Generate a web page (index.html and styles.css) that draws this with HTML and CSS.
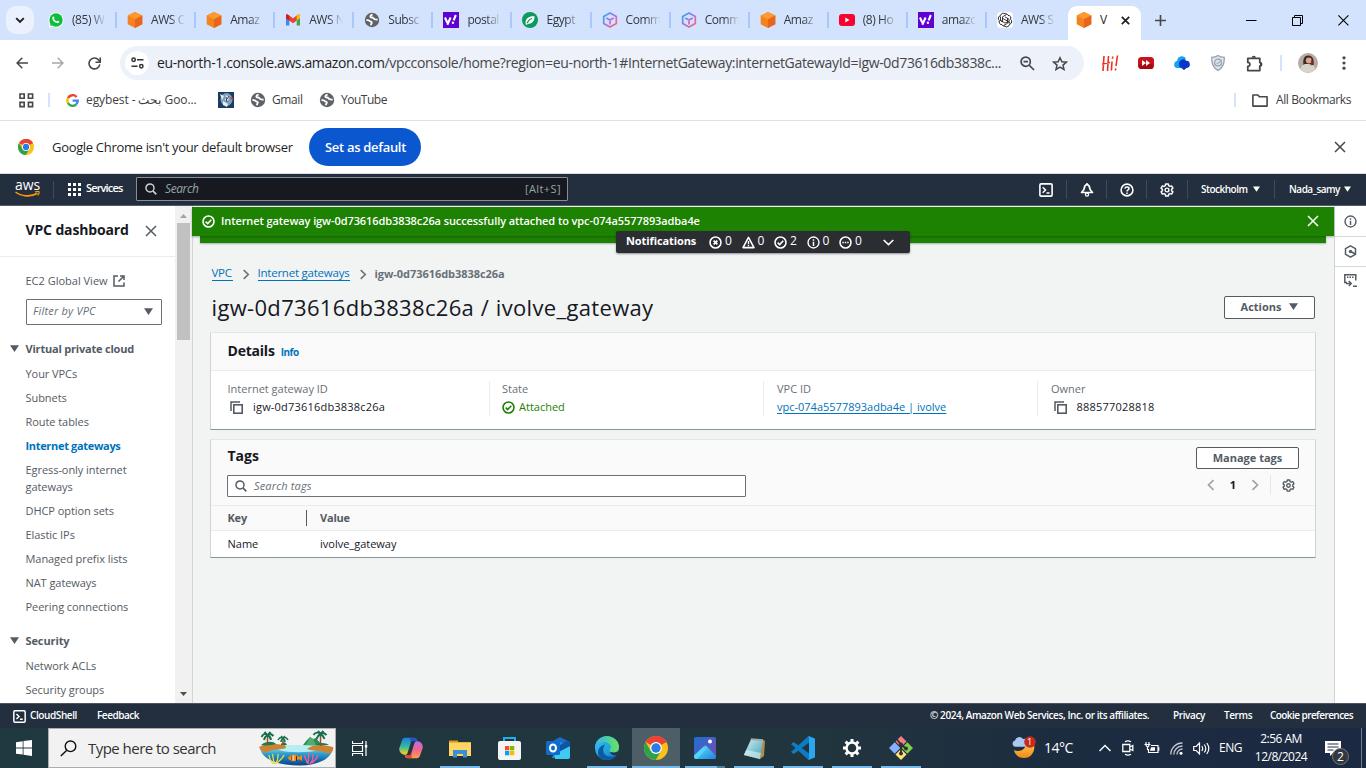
FILE: index.html
```html
<!DOCTYPE html>
<html lang="en">
<head>
<meta charset="utf-8">
<title>VPC | eu-north-1</title>
<link rel="stylesheet" href="styles.css">
</head>
<body>
<svg class="defs" aria-hidden="true">
  <defs>
    <linearGradient id="gCube" x1="0" y1="0" x2="1" y2="1"><stop offset="0" stop-color="#19b5e6"/><stop offset=".5" stop-color="#b06ee8"/><stop offset="1" stop-color="#ff6a5a"/></linearGradient>
    <linearGradient id="gCopA" x1="0" y1="0" x2="0" y2="1"><stop offset="0" stop-color="#1b7fe0"/><stop offset=".5" stop-color="#2fb8a0"/><stop offset="1" stop-color="#ffd21f"/></linearGradient>
    <linearGradient id="gCopB" x1="0" y1="0" x2="0" y2="1"><stop offset="0" stop-color="#b06ef0"/><stop offset=".5" stop-color="#f2648f"/><stop offset="1" stop-color="#ffa04a"/></linearGradient>
    <linearGradient id="gEdge" x1="0" y1="0" x2="1" y2="1"><stop offset="0" stop-color="#35c1f1"/><stop offset=".6" stop-color="#1f9fdc"/><stop offset="1" stop-color="#0b60b0"/></linearGradient>
    <linearGradient id="gEdgeG" x1="0" y1="0" x2="1" y2="0"><stop offset="0" stop-color="#2fb6ec"/><stop offset="1" stop-color="#6be35c"/></linearGradient>
    <linearGradient id="gPho" x1="0" y1="0" x2="1" y2="1"><stop offset="0" stop-color="#1c6fd0"/><stop offset="1" stop-color="#7d4bb5"/></linearGradient>
    <linearGradient id="gPho2" x1="0" y1="0" x2="1" y2="1"><stop offset="0" stop-color="#5fe0fb"/><stop offset="1" stop-color="#1c86dd"/></linearGradient>
    <linearGradient id="gNote" x1="0" y1="0" x2="1" y2="1"><stop offset="0" stop-color="#d6f1f5"/><stop offset="1" stop-color="#3a9fb3"/></linearGradient>
    <linearGradient id="gBeach" x1="0" y1="0" x2="0" y2="1"><stop offset="0" stop-color="#a8ecf4"/><stop offset=".4" stop-color="#2a9fd0"/><stop offset="1" stop-color="#0b3f86"/></linearGradient>
    <linearGradient id="gMoon" x1="0" y1="0" x2="0" y2="1"><stop offset="0" stop-color="#ffc94a"/><stop offset="1" stop-color="#f08a1c"/></linearGradient>

    <symbol id="aws-cube" viewBox="0 0 16 16"><path d="M8 0l7.3 3.6v8.6L8 16 .7 12.2V3.6z" fill="#f58220"/><path d="M8 0l7.3 3.6L8 7.2.7 3.6z" fill="#fc9a2e"/><path d="M8 7.2l7.3-3.6v8.6L8 16z" fill="#e8651c"/></symbol>
    <symbol id="globe" viewBox="0 0 16 16"><circle cx="8" cy="8" r="7.2" fill="#5f6368"/><path d="M2.400 8.200c1.800-.3 3 .1 3.600 1 .5.800 1.700.2 1.800 1.300 0 1-.9 1.200-.8 2.700" fill="none" stroke="#fff" stroke-width="1.800"/><path d="M8.600 2.700c-2 .5-2.700 1.600-2 2.400.7.700 2.200 0 2.700 1 .5 1.100 1.600 1.700 4.300 1.500" fill="none" stroke="#fff" stroke-width="1.800"/></symbol>
    <symbol id="yahoo" viewBox="0 0 16 16"><path d="M0 0h16v16H0z" fill="#5f01d1"/><path d="M2 5.500l2.200 5M7.600 5.500L4.300 12.800M12.800 3l-2.100 5.400" stroke="#fff" stroke-width="2.100" fill="none"/><circle cx="9.900" cy="10.800" r="1.200" fill="#fff"/></symbol>
    <symbol id="cube-line" viewBox="0 0 16 16"><path d="M8 1l6.300 3.500v7L8 15l-6.300-3.500v-7zM4.200 5.900L8 8l3.800-2.100M8 8v4.600" fill="none" stroke="url(#gCube)" stroke-width="1.700"/></symbol>
    <symbol id="chrome" viewBox="0 0 24 24"><circle cx="12" cy="12" r="12" fill="#fbc116"/><path d="M12 12L1.600 6A12 12 0 0 1 22.400 6z" fill="#ea4335"/><path d="M12 0a12 12 0 0 1 10.400 6.500H12z" fill="#ea4335"/><path d="M1.600 6A12 12 0 0 0 11.800 24L17 15 12 12 6.800 15z" fill="#2ba24c"/><circle cx="12" cy="12" r="5.900" fill="#fff"/><circle cx="12" cy="12" r="4.700" fill="#2a7bea"/></symbol>
    <symbol id="x" viewBox="0 0 12 12"><path d="M1 1l10 10M11 1L1 11" fill="none" stroke="currentColor" stroke-width="1.500"/></symbol>
    <symbol id="caret" viewBox="0 0 8 6"><path d="M0 0h8L4 6z" fill="currentColor"/></symbol>
    <symbol id="shell" viewBox="0 0 14 14"><rect x=".9" y=".9" width="12.200" height="12.200" rx="1.200" fill="none" stroke="currentColor" stroke-width="1.600"/><path d="M3.700 4.300l2.800 2.700-2.800 2.700M7.500 10h3" fill="none" stroke="currentColor" stroke-width="1.500"/></symbol>
    <symbol id="gear" viewBox="0 0 14 14"><path d="M5.700 1h2.600l.4 1.700 1.200.7 1.700-.5 1.300 2.200L11.600 6.300v1.400l1.300 1.200-1.300 2.200-1.700-.5-1.200.7-.4 1.700H5.700l-.4-1.700-1.200-.7-1.700.5-1.300-2.200 1.300-1.200V6.300L1.100 5.100l1.300-2.200 1.700.5 1.200-.7z" fill="none" stroke="currentColor" stroke-width="1.500" stroke-linejoin="round"/><circle cx="7" cy="7" r="1.900" fill="none" stroke="currentColor" stroke-width="1.400"/></symbol>
    <symbol id="search" viewBox="0 0 14 14"><circle cx="5.800" cy="5.800" r="4.700" fill="none" stroke="currentColor" stroke-width="1.700"/><path d="M9.200 9.200l4 4" stroke="currentColor" stroke-width="1.900"/></symbol>
    <symbol id="ok" viewBox="0 0 14 14"><circle cx="7" cy="7" r="5.900" fill="none" stroke="currentColor" stroke-width="1.700"/><path d="M3.900 7.200l2.200 2 3.900-4.100" fill="none" stroke="currentColor" stroke-width="1.700"/></symbol>
    <symbol id="info" viewBox="0 0 14 14"><circle cx="7" cy="7" r="5.900" fill="none" stroke="currentColor" stroke-width="1.500"/><path d="M7 6.200v4.600M7 3.400V5" stroke="currentColor" stroke-width="1.600"/></symbol>
    <symbol id="copy" viewBox="0 0 13 13"><path d="M1 10V1h9" fill="none" stroke="currentColor" stroke-width="1.500"/><rect x="3.800" y="3.800" width="8.400" height="8.400" fill="none" stroke="currentColor" stroke-width="1.600"/></symbol>
    <symbol id="chev" viewBox="0 0 8 12"><path d="M1.500 1.200L6.500 6l-5 4.800" fill="none" stroke="currentColor" stroke-width="1.700"/></symbol>
  </defs>
</svg>

<header class="tabs">
  <div class="tab-search"><svg width="10" height="7" viewBox="0 0 10 7"><path d="M1.200 1.200L5 5l3.800-3.800" fill="none" stroke="#1f1f1f" stroke-width="1.900"/></svg></div>
  <div class="tab"><svg width="16" height="16" viewBox="0 0 16 16"><circle cx="8" cy="8" r="7.600" fill="#fff"/><path d="M.8 15.400l1-3.600A7 7 0 1 1 4.500 14.400z" fill="#fff"/><circle cx="8" cy="8" r="6.700" fill="#0ebd3c"/><path d="M2 14l.8-3 2 2z" fill="#0ebd3c"/><path d="M5.300 4.300l1.200 1.400-.5 1c.6 1.300 1.600 2.200 2.900 2.700l1-.8 1.500 1.200c-.3 1.600-1.900 1.700-3.300 1C6 9.800 4.700 8.300 4.300 6.500c0-1 .3-1.800 1-2.200z" fill="#fff"/></svg><span>(85) W</span></div>
  <div class="tab"><svg width="16" height="16"><use href="#aws-cube"/></svg><span>AWS C</span></div>
  <div class="tab"><svg width="16" height="16"><use href="#aws-cube"/></svg><span>Amaz</span></div>
  <div class="tab"><svg width="16" height="16" viewBox="0 0 16 16"><path d="M1 3.500v10h3.300V6z" fill="#4285f4"/><path d="M11.700 6v7.500H15v-10z" fill="#34a853"/><path d="M1 3v3.300l7 5 7-5V3.600c0-1.200-1.300-1.500-2.200-.9L8 6.300 3.200 2.700C2.200 2 1 2.300 1 3z" fill="#ea4335"/><path d="M11.700 4v4.700L15 6.200V3.500c0-1.300-1.500-1.500-2.300-.7z" fill="#fbbc04"/><path d="M1 3.500v2.700l3.300 2.500V4C3 2 1 2 1 3.500z" fill="#c5221f"/></svg><span>AWS N</span></div>
  <div class="tab"><svg width="16" height="16"><use href="#globe"/></svg><span>Subsc</span></div>
  <div class="tab"><svg width="16" height="16"><use href="#yahoo"/></svg><span>postal</span></div>
  <div class="tab"><svg width="16" height="16" viewBox="0 0 16 16"><circle cx="8" cy="8" r="8" fill="#0d9960"/><path d="M3.500 10.500C3.500 6.500 7 3.800 12.500 4.200c.2 5-2.600 7.600-6.300 7.500L4.500 13l-.7-.7z" fill="#fff"/><path d="M5 11.200c1.200-2.600 3-4.200 5-5" fill="none" stroke="#0d9960" stroke-width="1.200"/></svg><span>Egypt</span></div>
  <div class="tab"><svg width="16" height="16"><use href="#cube-line"/></svg><span>Comm</span></div>
  <div class="tab"><svg width="16" height="16"><use href="#cube-line"/></svg><span>Comm</span></div>
  <div class="tab"><svg width="16" height="16"><use href="#aws-cube"/></svg><span>Amaz</span></div>
  <div class="tab"><svg width="16" height="16" viewBox="0 0 16 16"><rect y="2" width="16" height="12" rx="3" fill="#f8002f"/><path d="M6.300 5.500v5L10.500 8z" fill="#fff"/></svg><span>(8) Ho</span></div>
  <div class="tab"><svg width="16" height="16"><use href="#yahoo"/></svg><span>amazc</span></div>
  <div class="tab last"><svg width="16" height="16" viewBox="0 0 16 16"><rect width="16" height="16" rx="4" fill="#fff"/><path d="M8 1.800a2.800 2.800 0 0 1 3 1.500 2.800 2.800 0 0 1 2.600 4 2.900 2.900 0 0 1-1.100 5.100A2.800 2.800 0 0 1 8 14.200a2.900 2.900 0 0 1-3-1.500 2.800 2.800 0 0 1-2.600-4 2.900 2.900 0 0 1 1.100-5.100A2.900 2.900 0 0 1 8 1.800z" fill="none" stroke="#222"/><path d="M5.500 9.700V4.800l4-2.200M5.500 6.300l4.700 2.600 3 1.800M8 4.900l4 2.300v4.500M10.500 6.300v5l-4 2.200M10.500 9.700L8 11.100l-5-3M5.500 9.700L3.500 8.500v-4" fill="none" stroke="#222" stroke-width=".9"/></svg><span>AWS S</span></div>
  <div class="tab-active"><svg width="16" height="16"><use href="#aws-cube"/></svg><span>V</span><svg class="dark" width="9" height="9" viewBox="0 0 9 9"><path d="M.8.8l7.400 7.400M8.200.8L.8 8.200" stroke="currentColor" stroke-width="1.700"/></svg></div>
  <svg class="plus" width="11" height="11" viewBox="0 0 11 11"><path d="M5.500 0v11M0 5.500h11" stroke="#444746" stroke-width="1.600"/></svg>
  <div class="win">
    <svg width="11" height="11" viewBox="0 0 11 11"><path d="M0 5.500h10.500" stroke="#000"/></svg>
    <svg width="11" height="11" viewBox="0 0 11 11"><path d="M.5 2.500h8v8h-8zM2.500 2.500v-2h8v8h-2" fill="none" stroke="#000"/></svg>
    <svg width="11" height="11" viewBox="0 0 11 11"><path d="M.4.4l10 10M10.400.4l-10 10" stroke="#000" stroke-width="1.100"/></svg>
  </div>
</header>

<div class="toolbar">
  <svg class="t-back" width="12" height="12" viewBox="0 0 12 12"><path d="M12 6H1.200M6.300.8L1.100 6l5.200 5.200" fill="none" stroke="#474747" stroke-width="1.500"/></svg>
  <svg class="t-fwd" width="12" height="12" viewBox="0 0 12 12"><path d="M0 6h10.800M5.700.8L10.900 6l-5.200 5.200" fill="none" stroke="#a9a9a9" stroke-width="1.500"/></svg>
  <svg class="t-rel" width="13" height="13" viewBox="0 0 13 13"><path d="M11.800 7.300A5.400 5.400 0 1 1 10.600 3L12 4.500" fill="none" stroke="#474747" stroke-width="1.600"/><path d="M12.200.4v4.800H7.500" fill="none" stroke="#474747" stroke-width="1.600"/></svg>
  <div class="omni">
    <div class="tune"><svg width="13" height="12" viewBox="0 0 13 12"><g fill="none" stroke="#333" stroke-width="1.500"><circle cx="2.600" cy="2.700" r="1.700"/><path d="M6 2.700h6.500M.5 9.300h6"/><circle cx="10.300" cy="9.300" r="1.700"/></g></svg></div>
    <span class="url"><b>eu-north-1.console.aws.amazon.com</b>/vpcconsole/home?region=eu-north-1#InternetGateway:internetGatewayId=igw-0d73616db3838c...</span>
    <svg class="o-zoom" width="15" height="15" viewBox="0 0 15 15"><circle cx="5.700" cy="5.700" r="4.600" fill="none" stroke="#474747" stroke-width="1.700"/><path d="M9 9l5 5M3.500 5.700h4.500" stroke="#474747" stroke-width="1.700"/></svg>
    <svg class="o-star" width="16" height="15" viewBox="0 0 16 15"><path d="M8 1.800l1.900 4 4.400.4-3.300 2.900 1 4.300L8 11.100l-4 2.300 1-4.300-3.300-2.900 4.400-.4z" fill="none" stroke="#474747" stroke-width="1.500"/></svg>
  </div>
  <div class="ext">
    <svg width="17" height="17" viewBox="0 0 17 17"><path d="M2 1L1 16M6.500 1l-1 15M0 9l8-1.500M10 6.500l-.6 9M10.700 1.500l-.2 2.300M15.500.5L14 11M13.700 13.500l-.3 2" fill="none" stroke="#ea3323" stroke-width="1.600"/></svg>
    <svg width="16" height="12" viewBox="0 0 16 12"><rect width="16" height="12" rx="3.500" fill="#c8131c"/><rect x="1" y="7" width="14" height="5" rx="2" fill="#a50d16"/><path d="M4 3v6l4-3zM8 3v6l4-3z" fill="#fff"/></svg>
    <svg width="16" height="14" viewBox="0 0 16 14"><path d="M.2 8.500a4 4 0 0 1 3-3.700 4.800 4.800 0 0 1 8.300-3V12H3.500A3.400 3.400 0 0 1 .2 8.500z" fill="#12a3f5"/><path d="M5 7.500a4 4 0 0 1 7-2.800 3.600 3.600 0 1 1 .4 7.300L10 14.200 7.500 12A4 4 0 0 1 5 7.500z" fill="#0b36c9"/></svg>
    <svg width="14" height="16" viewBox="0 0 14 16"><path d="M7 .6C9 2 11 2.400 13.300 2.400c.3 6-1.400 10.500-6.300 13C2.100 12.900.4 8.400.7 2.400 3 2.400 5 2 7 .6z" fill="#dfe3ea" stroke="#98a1b0" stroke-width="1.200"/><circle cx="7" cy="7.500" r="3.400" fill="none" stroke="#98a1b0" stroke-width="1.300"/><path d="M5.500 7.800l1.200 1 2.200-2.600" fill="none" stroke="#8490a3"/></svg>
    <svg width="17" height="17" viewBox="0 0 17 17"><path d="M1.800 3.300h12v4.300a1.600 1.600 0 0 1 0 3.400v4.600h-12v-4.100a2 2 0 1 0 0-4.100z" fill="none" stroke="#474747" stroke-width="1.800" stroke-linejoin="round"/><path d="M5.600 2.800a2 2 0 1 1 4.300 0zM14 7.300a2 2 0 1 1 0 4z" fill="#474747"/></svg>
    <i></i>
    <svg width="20" height="20" viewBox="0 0 20 20"><circle cx="10" cy="10" r="10" fill="#b5aba3"/><path d="M5.500 12C4.500 5 7 2.300 10.500 2.500c4 .2 6 4 5 9.500z" fill="#3a2a28"/><circle cx="10.800" cy="7.500" r="3" fill="#d9a48f"/><path d="M2.500 16.500c1-5 4-6 7-5.500 4 0 7 1.500 8 5A10 10 0 0 1 2.500 16.500z" fill="#d5d3cc"/><path d="M13.500 6l2 4-3 3z" fill="#93251e"/></svg>
    <svg width="4" height="14" viewBox="0 0 4 14"><g fill="#474747"><circle cx="2" cy="1.800" r="1.600"/><circle cx="2" cy="7" r="1.600"/><circle cx="2" cy="12.200" r="1.600"/></g></svg>
  </div>
</div>

<div class="bookmarks">
  <svg class="b-grid" width="15" height="15" viewBox="0 0 15 15"><path d="M1 1h4.200v4.200H1zM9.400 1h4.200v4.200H9.400zM1 9.400h4.200v4.200H1zM9.400 9.400h4.200v4.200H9.400z" fill="none" stroke="#474747" stroke-width="1.600"/></svg>
  <i class="b-sep"></i>
  <svg class="b-g" width="13" height="13" viewBox="0 0 13 13"><g fill="none" stroke-width="2.400"><path d="M10.600 3A5.200 5.200 0 0 0 2 4" stroke="#ea4335"/><path d="M2 4a5.200 5.200 0 0 0 0 5" stroke="#fbbc05"/><path d="M2 9a5.200 5.200 0 0 0 8.200 1.400" stroke="#34a853"/><path d="M10.200 10.400A5 5 0 0 0 11.700 6.600H6.600" stroke="#4285f4"/></g></svg>
  <span class="b-egy">egybest - بحث Goo...</span>
  <svg class="b-pic" width="16" height="16" viewBox="0 0 16 16"><path d="M0 0h16v16H0z" fill="#1b3c60"/><ellipse cx="8.500" cy="7.500" rx="6" ry="6.500" fill="#7ea0bd"/><path d="M2 2l4 2-2 4zM8 3l3 2-1 4-3-1zM5 9l5 3-1 3-4-2z" fill="#e6eef4"/><path d="M8 5l1 5M11 4l-2 3" stroke="#27405c" fill="none"/><path d="M12.500 5h2v2.500h-2z" fill="#d0402f"/></svg>
  <svg class="b-gl" width="16" height="16"><use href="#globe"/></svg><span class="b-gm">Gmail</span>
  <svg class="b-gl2" width="16" height="16"><use href="#globe"/></svg><span class="b-t">YouTube</span>
  <div class="b-all"><i class="b-sep"></i><svg width="16" height="13" viewBox="0 0 16 13"><path d="M.9 1h5l1.500 1.700h7.700v9.400H.9z" fill="none" stroke="#474747" stroke-width="1.600" stroke-linejoin="round"/></svg><span>All Bookmarks</span></div>
</div>

<div class="infobar">
  <svg width="16" height="16"><use href="#chrome"/></svg>
  <span>Google Chrome isn't your default browser</span>
  <button>Set as default</button>
  <svg class="close" width="12" height="12"><use href="#x"/></svg>
</div>

<nav class="aws">
  <div class="logo"><span>aws</span><svg width="25" height="7" viewBox="0 0 25 7"><path d="M.5 1C6 5.500 16 6.300 22.500 2.300" fill="none" stroke="#f90" stroke-width="1.600"/><path d="M20 1c1.500-.6 3.500-.8 4-.3.400.7-.3 2.500-1.300 3.800" fill="none" stroke="#f90" stroke-width="1.200"/></svg></div>
  <i class="sep"></i>
  <svg class="apps" width="13" height="13" viewBox="0 0 13 13"><path d="M0 0h3v3H0zM5 0h3v3H5zM10 0h3v3h-3zM0 5h3v3H0zM5 5h3v3H5zM10 5h3v3h-3zM0 10h3v3H0zM5 10h3v3H5zM10 10h3v3h-3z" fill="#fff"/></svg>
  <span class="services">Services</span>
  <div class="nav-search"><svg width="12" height="12"><use href="#search"/></svg><em>Search</em><span>[Alt+S]</span></div>
  <div class="nav-icons">
    <div class="c1"><svg width="14" height="14"><use href="#shell"/></svg></div>
    <div class="c2"><svg width="14" height="14" viewBox="0 0 14 14"><path d="M7 1.500c-2 .5-2.600 1.900-2.700 3.600C4.200 7 3 8 1.500 9.500h11C11 8 9.800 7 9.700 5.100 9.600 3.400 9 2 7 1.500z" fill="none" stroke="#fff" stroke-width="1.700" stroke-linejoin="round"/><path d="M7 0v2" stroke="#fff" stroke-width="1.500"/><circle cx="7" cy="11.600" r="1.600" fill="none" stroke="#fff" stroke-width="1.300"/></svg></div>
    <div class="c3"><svg width="14" height="14" viewBox="0 0 14 14"><circle cx="7" cy="7" r="5.900" fill="none" stroke="#fff" stroke-width="1.600"/><path d="M5 5.600C5.100 3.500 9 3.600 9 5.600 9 6.900 7 6.900 7 8.500M7 9.500V11" fill="none" stroke="#fff" stroke-width="1.500"/></svg></div>
    <div class="c4"><svg width="14" height="14"><use href="#gear"/></svg></div>
    <div class="c5"><span>Stockholm</span><svg width="7" height="6"><use href="#caret"/></svg></div>
    <div class="c6"><span>Nada_samy</span><svg width="7" height="6"><use href="#caret"/></svg></div>
  </div>
</nav>

<div class="body">
  <aside class="side">
    <div class="side-h"><h2>VPC dashboard</h2><svg width="12" height="12"><use href="#x"/></svg></div>
    <div class="ec2"><span>EC2 Global View</span><svg width="12" height="12" viewBox="0 0 12 12"><path d="M5 1H1v10h10V7.500" fill="none" stroke="#545b64" stroke-width="1.500"/><path d="M7 1h4v4M11 1L5.500 6.500" fill="none" stroke="#545b64" stroke-width="1.500"/></svg></div>
    <div class="select"><em>Filter by VPC</em><svg width="9" height="7"><use href="#caret"/></svg></div>
    <div class="group"><svg width="9" height="7"><use href="#caret"/></svg><b>Virtual private cloud</b></div>
    <ul>
      <li>Your VPCs</li><li>Subnets</li><li>Route tables</li><li class="on">Internet gateways</li><li>Egress-only internet gateways</li><li>DHCP option sets</li><li>Elastic IPs</li><li>Managed prefix lists</li><li>NAT gateways</li><li>Peering connections</li>
    </ul>
    <div class="group g2"><svg width="9" height="7"><use href="#caret"/></svg><b class="sec">Security</b></div>
    <ul><li>Network ACLs</li><li>Security groups</li></ul>
  </aside>
  <div class="scroll"><svg width="7" height="4" viewBox="0 0 7 4"><path d="M0 4h7L3.500 0z" fill="#a3a3a3"/></svg><div class="thumb"></div><svg width="7" height="4" viewBox="0 0 7 4"><path d="M0 0h7L3.500 4z" fill="#505050"/></svg></div>

  <main>
    <div class="flash"><svg width="13" height="13"><use href="#ok"/></svg><span>Internet gateway igw-0d73616db3838c26a successfully attached to vpc-074a5577893adba4e</span><svg class="fx" width="12" height="12"><use href="#x"/></svg></div>
    <div class="flash2"></div>
    <div class="notif">
      <b>Notifications</b>
      <span><svg width="13" height="13" viewBox="0 0 14 14"><circle cx="7" cy="7" r="5.900" fill="none" stroke="#fff" stroke-width="1.700"/><path d="M5 5l4 4M9 5L5 9" stroke="#fff" stroke-width="1.900"/></svg>0</span>
      <span><svg width="13" height="13" viewBox="0 0 14 14"><path d="M7 1.500l5.900 11H1.100z" fill="none" stroke="#fff" stroke-width="1.700" stroke-linejoin="round"/><path d="M7 5.500v3M7 9.500V11" stroke="#fff" stroke-width="1.500"/></svg>0</span>
      <span><svg width="13" height="13"><use href="#ok"/></svg>2</span>
      <span><svg width="13" height="13"><use href="#info"/></svg>0</span>
      <span><svg width="13" height="13" viewBox="0 0 14 14"><circle cx="7" cy="7" r="5.900" fill="none" stroke="#fff" stroke-width="1.700"/><path d="M3.600 7h1.600M6.200 7h1.600M8.800 7h1.600" stroke="#fff" stroke-width="1.700"/></svg>0</span>
      <svg class="down" width="11" height="7" viewBox="0 0 11 7"><path d="M.7 1l4.800 4.600L10.300 1" fill="none" stroke="#fff" stroke-width="1.600"/></svg>
    </div>
    <div class="crumbs"><a>VPC</a><svg width="8" height="11"><use href="#chev"/></svg><a class="c-ig">Internet gateways</a><svg width="8" height="11"><use href="#chev"/></svg><b>igw-0d73616db3838c26a</b></div>
    <div class="title"><h1>igw-0d73616db3838c26a / ivolve_gateway</h1><button>Actions<svg width="9" height="7"><use href="#caret"/></svg></button></div>

    <section class="card details">
      <header><h3>Details</h3><a>Info</a></header>
      <div class="cols">
        <div class="k1"><label>Internet gateway ID</label><p><svg width="13" height="13"><use href="#copy"/></svg><span class="wide">igw-0d73616db3838c26a</span></p></div>
        <div><label>State</label><p class="green"><svg width="13" height="13"><use href="#ok"/></svg><span>Attached</span></p></div>
        <div class="k3"><label>VPC ID</label><p><a>vpc-074a5577893adba4e | ivolve</a></p></div>
        <div class="k3"><label>Owner</label><p><svg width="13" height="13"><use href="#copy"/></svg><span class="wide">888577028818</span></p></div>
      </div>
    </section>

    <section class="card tags">
      <div class="tags-h"><h3>Tags</h3><button>Manage tags</button></div>
      <div class="tags-f">
        <div class="find"><svg width="12" height="12"><use href="#search"/></svg><em>Search tags</em></div>
        <div class="pager"><svg class="flip" width="8" height="12"><use href="#chev"/></svg><b>1</b><svg width="8" height="12"><use href="#chev"/></svg><i></i><svg class="pg" width="13" height="13"><use href="#gear"/></svg></div>
      </div>
      <div class="row head"><div>Key</div><div>Value</div></div>
      <div class="row"><div>Name</div><div>ivolve_gateway</div></div>
    </section>
  </main>

  <aside class="rail">
    <div><svg width="13" height="13"><use href="#info"/></svg></div>
    <div><svg width="13" height="13" viewBox="0 0 13 13"><path d="M6.500.9l5 2.800v5.600l-5 2.800-5-2.800V3.700z" fill="none" stroke="#545b64" stroke-width="1.500"/><path d="M6.500 6.500L11.500 9" stroke="#545b64" stroke-width="1.500"/><circle cx="6.500" cy="6.500" r="1.700" fill="#545b64"/></svg></div>
    <div><svg width="13" height="13" viewBox="0 0 13 13"><path d="M3 8.500H.8V.8h11v5.700" fill="none" stroke="#545b64" stroke-width="1.500"/><path d="M3 3.300h1.500M5.500 3.300H7M8 3.300h1.500M2 9.500h5M4.800 7l2.500 2.500L4.800 12M9 12.200h4" fill="none" stroke="#545b64" stroke-width="1.400"/></svg></div>
  </aside>
</div>

<footer>
  <svg width="13" height="13"><use href="#shell"/></svg><span class="f1">CloudShell</span><span class="f2">Feedback</span>
  <span class="f3">© 2024, Amazon Web Services, Inc. or its affiliates.</span><span class="f4">Privacy</span><span class="f5">Terms</span><span class="f6">Cookie preferences</span>
</footer>

<div class="taskbar">
  <div class="start"><svg width="16" height="16" viewBox="0 0 16 16"><path d="M0 2.200L6.700 1.300v6.200H0zM7.500 1.100L16 0v7.500H7.500zM0 8.400h6.700v6.200L0 13.700zM7.500 8.400H16V16l-8.500-1.200z" fill="#fff"/></svg></div>
  <div class="tb-search">
    <svg width="17" height="17" viewBox="0 0 17 17"><circle cx="10.500" cy="6.300" r="5.300" fill="none" stroke="#111" stroke-width="1.400"/><path d="M6.800 10.200L.8 16" stroke="#111" stroke-width="1.500"/></svg>
    <span>Type here to search</span>
    <svg class="beach" width="75" height="36" viewBox="0 0 75 36">
      <path d="M1 19c12-4 55-4 73 0-2 8-11 16-33 16.500C17 35.500 4 29 1 19z" fill="url(#gBeach)"/>
      <path d="M20 15h34l6 5c-12 3-30 3-40 0z" fill="#b5eef3"/>
      <path d="M44 15l4-5 3-3 3 2 3-1 5 6 4 2z" fill="#2c8a5a"/><path d="M51 7l3 2 3 6H47z" fill="#4fae6d"/>
      <path d="M0 17c4-3 11-4 17-3l9 1 1 3c-6 2-15 1-20 5-3-1-6-3-7-6zM48 19c6-5 15-5 26-2 1 3-1 6-5 7-5-4-12-2-21-5z" fill="#c98434"/>
      <path d="M2 15c5-4 12-4 15-1-4 1-9 2-15 1zM22 14c2-3 5-2 6 1h-6zM57 15c4-3 10-2 13 0z" fill="#187a55"/>
      <path d="M8.500 15V6M24 15V9M61.500 16V4" stroke="#8a5526" stroke-width="1.500"/>
      <g fill="none" stroke="#14704f" stroke-width="2"><path d="M8.500 5C6 3 4 4 2.500 7M8.500 5C7 6 5.500 7 5 10M8.500 5c2-2 4-1 6 1M8.500 5c2 1 3 2 3.500 5M8 5L5.500 2M9 5l2.500-3"/><path d="M24 8c-2-1-4 0-5 2M24 8c-1 1-2 2-2 4M24 8c2-1 4 0 5 2M24 8c1 1 2 2 2 4M24 8l-2-2M24 8l2-2" stroke-width="1.500"/><path d="M61.500 4c-2-2-5-2-7 1M61.500 4c-2 1-3 2-4 5M61.500 4c2-2 4-1 6 1M61.500 4c2 1 3 2 4 5M61.500 4L59 .8M61.500 4l3-3"/></g>
      <path d="M14 34c-2-4-4-5-4-9M15 34c0-5-2-7-1-10M16 34c4-4 3-7 3-10M18 33c4-4 6-5 7-8" stroke="#e6dc4a" stroke-width="1.300" fill="none"/>
      <path d="M48 33c0-4-3-4-2-8M49 34c1-5 0-7 1-11M51 34c4-4 3-6 3-10M53 33c3-3 5-4 6-8" stroke="#ef5f9b" stroke-width="1.400" fill="none"/>
      <path d="M29 28c2-4 8-5 11-1l3-2v6l-3-2c-3 3-9 3-11-1z" fill="#f58a1f"/><path d="M33 25.500v5M37.500 26v5" stroke="#3a2a20" stroke-width="1"/><path d="M34 25.500v5" stroke="#fff"/>
    </svg>
  </div>
  <div class="app"><svg width="16" height="15" viewBox="0 0 16 15"><path d="M.5 0v2.500h10V0M.5 15v-2.500h10V15M.5 4.500h10v6H.500zM14 0v15" fill="none" stroke="#fff" stroke-width="1.200"/><path d="M12.800 4h2.500v2.500h-2.500z" fill="#fff"/></svg></div>
  <div class="app cop"><svg width="24" height="22" viewBox="0 0 24 22"><path d="M6 .8h9c2 0 2.800 1.200 3.300 3H14c-1.500 0-2 1-2.600 3L8.500 16c-.5 1.300-1.500 2-3 1.700C2 17.300-.2 14.500.3 11L3 3.500C3.600 1.700 4.500.8 6 .8z" fill="url(#gCopA)"/><path d="M18 21.200H9c-2 0-2.800-1.200-3.300-3H10c1.500 0 2-1 2.600-3L15.500 6c.5-1.300 1.500-2 3-1.700 3.500.4 5.700 3.200 5.200 6.700L21 18.500c-.6 1.800-1.500 2.700-3 2.700z" fill="url(#gCopB)"/><path d="M11 1h4c2 0 2.800 1.200 3.300 3H14c-1.500 0-2 .7-2.600 2z" fill="#2a52d0"/><path d="M6 18h5c1 0 1.500-1.500 2-3l-.5 6H9c-2 0-2.700-1-3-3z" fill="#e8452c"/></svg></div>
  <div class="app run"><svg width="22" height="20" viewBox="0 0 22 20"><path d="M0 2.500h9V6H0z" fill="#dd9a12"/><path d="M0 4h22v14H0z" fill="#ffd565"/><path d="M0 4h22v1H0z" fill="#e9b53c"/><path d="M4 19.500V12h14v7.500h-4V16H8v3.500z" fill="#3a8fd6"/></svg></div>
  <div class="app"><svg width="23" height="23" viewBox="0 0 23 23"><path d="M6 7V1h11v6" fill="none" stroke="#1eb0e8" stroke-width="2"/><rect y="4" width="23" height="19" rx="2" fill="#f4f4f4"/><path d="M7 9h4.300v4.300H7z" fill="#f25022"/><path d="M12 9h4.300v4.300H12z" fill="#7fba00"/><path d="M7 14h4.300v4.300H7z" fill="#00a4ef"/><path d="M12 14h4.300v4.300H12z" fill="#ffb900"/></svg></div>
  <div class="app"><svg width="24" height="22" viewBox="0 0 24 22"><path d="M5 5L14 0l10 5v5L5 16z" fill="#1a6dc4"/><path d="M14 5l9 5v11H6z" fill="#2596dd"/><path d="M9 15l15-6v11c0 1-.5 2-2 2H9z" fill="#3fcaf2"/><path d="M24 9L9 17v-6l12-7 3 1.500z" fill="#0f53a8"/><rect y="4" width="14" height="14" rx="1.500" fill="#0f6cc8"/><ellipse cx="7" cy="11" rx="3" ry="3.500" fill="none" stroke="#fff" stroke-width="2"/></svg></div>
  <div class="app run"><svg width="24" height="24" viewBox="0 0 24 24"><circle cx="12" cy="12" r="12" fill="url(#gEdge)"/><path d="M1 7C4 .5 12-1.500 18 1.800c5 2.700 7 8 5.500 11.700-1 2.500-5 3.500-8 2.500-2-1-1-2 0-3.500C17 9 13 6 9.500 6 6 6 2.500 8.500 0 13c0-2.500.2-4 1-6z" fill="url(#gEdgeG)"/><path d="M8.500 12C7 17 11 22 19 20.500l3-1.500C18 25 9 25.500 4.500 21 1 16 4 10 10 8.500c-.8 1-1.300 2.300-1.500 3.500z" fill="#0c59a4"/><path d="M15 15.500c2 1.500 6 1.700 8.500-.5l-1.500 4c-1 .6-4 .5-6-1z" fill="#203540"/></svg></div>
  <div class="app cur"><svg width="24" height="24"><use href="#chrome"/></svg></div>
  <div class="app run duo"><svg width="22" height="22" viewBox="0 0 22 22"><rect width="22" height="22" rx="2" fill="url(#gPho)"/><path d="M1.500 21.500L10.500 9a1.500 1.500 0 0 1 2 0L22 19v1a2 2 0 0 1-2 2H2z" fill="url(#gPho2)"/><path d="M0 18.500L9.500 9.500l2.500 2.700L3 22H2a2 2 0 0 1-2-2z" fill="#4fd5fa"/><circle cx="16" cy="4.500" r="2" fill="#fff"/></svg></div>
  <div class="app run"><svg width="23" height="23" viewBox="0 0 23 23"><path d="M19 2l3 2-1 15-4 3z" fill="#b38b4a"/><path d="M8 2.500l12 .8-3 19L.8 18z" fill="url(#gNote)"/><path d="M.8 18l2.500-5L18 16l-1 6z" fill="#e4f0f2" opacity=".6"/><path d="M8 1.200l12 1v2L7.500 3z" fill="#a0abac"/></svg></div>
  <div class="app run"><svg width="24" height="24" viewBox="0 0 24 24"><path d="M17.500 0L24 2.800v18.400L17.500 24 2 9.800l-2-1.600L2.300 6l2.600 1.500L18 17.500v-11L5 16.500 2.300 18 0 15.800 2 14.200z" fill="#0e7cc5"/><path d="M17.500 0L24 2.800v18.400L17.500 24c.4-.3.500-.6.500-1.200V1.200c0-.6-.1-.9-.5-1.200z" fill="#2ba6f1"/></svg></div>
  <div class="app run"><svg width="18" height="18" viewBox="0 0 18 18"><circle cx="9" cy="9" r="5.500" fill="none" stroke="#fff" stroke-width="2.500"/><path d="M9 0v3M9 15v3M0 9h3M15 9h3M2.600 2.600l2.200 2.200M13.200 13.200l2.200 2.200M15.400 2.600l-2.200 2.200M4.800 13.200l-2.200 2.200" stroke="#fff" stroke-width="3"/></svg></div>
  <div class="app run"><svg width="24" height="24" viewBox="0 0 24 24"><path d="M12 0l5.500 5.500L12 11 6.500 5.500z" fill="#f77e80"/><path d="M18.300 6.300L24 12l-5.700 5.700L12.800 12z" fill="#80ce4c"/><path d="M5.700 6.300L11.300 12l-5.600 5.700L0 12z" fill="#86b1ff"/><path d="M12 13l5.500 5.500L12 24l-5.500-5.500z" fill="#ffe374"/><path d="M8 3.500l4 5v9M12 8.500l5 4" fill="none" stroke="#2c2f33" stroke-width="1.800"/><circle cx="12" cy="17.500" r="1.900" fill="#2c2f33"/><circle cx="12" cy="8.500" r="1.900" fill="#2c2f33"/><circle cx="17" cy="12.500" r="1.900" fill="#2c2f33"/></svg></div>
  <div class="weather"><svg width="24" height="24" viewBox="0 0 24 24"><path d="M2 14c4 2 12 1 12-7l8 1c1.500 7-2.500 14-10 14C7 22 3 19 2 14z" fill="url(#gMoon)"/><path d="M3.500 10.800a3.200 3.200 0 0 1-.5-6.300A4.500 4.500 0 0 1 11 3a3.800 3.800 0 0 1 2 7.800z" fill="#a9c9f2"/><circle cx="18" cy="6" r="5.800" fill="#c42b1c"/></svg><small>1</small></div>
  <span class="temp">14°C</span>
  <div class="tray">
    <svg width="12" height="8" viewBox="0 0 12 8"><path d="M.5 7L6 1.500 11.500 7" fill="none" stroke="#fff" stroke-width="1.400"/></svg>
    <svg width="12" height="16" viewBox="0 0 12 16"><path d="M.8 4.500h7v7h-7zM7.800 7l3-1.500v5L7.800 9M3 1.800Q6 0 9 1.800M3 14.200q3 1.800 6 0" fill="none" stroke="#fff" stroke-width="1.300"/></svg>
    <svg width="16" height="12" viewBox="0 0 16 12"><path d="M7 3.500h7v7H4.500V7M14.800 5.300v3.500M.5 2.500h6M2 0v2.500c0 3 3 3 3 0V0M3.500 5v3" fill="none" stroke="#fff" stroke-width="1.200"/><path d="M7 5.200h4v3.600H6z" fill="#fff"/></svg>
    <svg width="13" height="13" viewBox="0 0 13 13"><path d="M.8 12.500A11.500 11.500 0 0 1 12.500 1M3.800 12.500a8.600 8.600 0 0 1 8.700-8.500M7 12.500a5.500 5.500 0 0 1 5.500-5.500" fill="none" stroke="#c5ccd3" stroke-width="1.300"/><circle cx="11" cy="11.300" r="1.500" fill="#fff"/></svg>
    <svg width="17" height="13" viewBox="0 0 17 13"><path d="M.7 4.500h2.500L6.500 1v11L3.200 8.500H.7zM8.800 4q1.800 2.500 0 5M11.300 2.500q3 4 0 8M13.800 1q4 5.500 0 11" fill="none" stroke="#fff" stroke-width="1.200"/></svg>
  </div>
  <span class="lang">ENG</span>
  <div class="clock"><span>2:56 AM</span><span class="date">12/8/2024</span></div>
  <div class="action"><svg width="16" height="15" viewBox="0 0 16 15"><path d="M0 0h16v12H8l-3 3v-3H0z" fill="#fff"/><path d="M2.500 3h11M2.500 6h11M2.500 9h6" stroke="#22304a" stroke-width="1.200"/></svg><small>2</small></div>
  <i class="peek"></i>
</div>
</body>
</html>
```
FILE: styles.css
```css
* { box-sizing: border-box; }
body { margin: 0; width: 1366px; height: 768px; overflow: hidden; display: flex; flex-direction: column; background: #fff; font: 12px/16px "Open Sans", "Noto Sans", sans-serif; color: #16191f; white-space: nowrap; }
.defs { position: absolute; width: 0; height: 0; }
svg { display: block; flex: none; }
h1, h2, h3, p, ul { margin: 0; padding: 0; list-style: none; }
button { font-family: inherit; cursor: pointer; }

/* browser tabs */
.tabs { flex: none; height: 40px; background: #d3e3fd; display: flex; align-items: center; padding-left: 6px; }
.tab-search { width: 28px; height: 28px; border-radius: 10px; background: #ebf1fd; display: flex; align-items: center; justify-content: center; margin-right: 4px; }
.tab { width: 79.080px; height: 16px; display: flex; align-items: center; padding-left: 10px; border-right: 2px solid #a8c7fa; }
.tab.last { border-color: transparent; }
.tab span { margin-left: 8px; width: 35px; color: #33373c; letter-spacing: -0.45px; -webkit-mask-image: linear-gradient(90deg, #000 55%, transparent 98%); mask-image: linear-gradient(90deg, #000 55%, transparent 98%); }
.tab-active { width: 73px; height: 34px; align-self: flex-end; margin-left: 2px; background: #fff; border-radius: 9px 9px 0 0; display: flex; align-items: center; padding: 0 11px 6px 8px; margin-top: 6px; }
.tab-active span { margin: 0 auto 0 8px; color: #1f1f1f; }
.dark { color: #1f1f1f; }
.plus { margin-left: 14px; }
.win { display: flex; gap: 35px; margin-left: 80px; }

/* toolbar */
.toolbar { flex: none; height: 46px; display: flex; align-items: center; background: #fff; }
.t-back { margin-left: 16px; }
.t-fwd { margin-left: 24px; }
.t-rel { margin-left: 24px; }
.omni { margin-left: 19px; width: 964px; height: 34px; border-radius: 17px; background: #ecf1fa; display: flex; align-items: center; padding-left: 5px; }
.tune { width: 24px; height: 24px; border-radius: 12px; background: #fff; display: flex; align-items: center; justify-content: center; }
.url { margin-left: 8px; width: 863px; font-size: 14px; letter-spacing: -0.335px; color: #474747; }
.url b { font-weight: 400; color: #1f1f1f; letter-spacing: -0.385px; }
.o-star { margin-left: 17px; }
.ext { display: flex; align-items: center; flex: 1; margin-left: 18px; }
.ext svg:nth-child(2) { margin-left: 19px; }
.ext svg:nth-child(3) { margin-left: 20px; }
.ext svg:nth-child(4) { margin-left: 21px; }
.ext svg:nth-child(5) { margin-left: 21px; }
.ext i { width: 2px; height: 16px; background: #d3e3fd; margin: 0 16px 0 17px; }
.ext svg:nth-child(8) { margin-left: 24px; }

/* bookmarks */
.bookmarks { flex: none; height: 35px; border-bottom: 1px solid #dfe1e5; display: flex; align-items: center; padding-bottom: 6px; color: #3c4043; letter-spacing: -0.4px; }
.b-grid { margin-left: 19px; }
.b-sep { width: 2px; height: 14px; background: #d3e3fd; margin-left: 14px; }
.b-g { margin-left: 16px; }
.b-egy { margin-left: 7px; width: 132px; letter-spacing: -0.1px; }
.b-gl { margin-left: 16px; }
.b-gm { margin-left: 6px; width: 47px; }
.b-t { margin-left: 6px; letter-spacing: -0.48px; }
.b-all { margin-left: auto; margin-right: 15px; display: flex; align-items: center; letter-spacing: -0.38px; }
.b-all svg { margin: 0 8px 0 16px; }

/* default-browser infobar */
.infobar { flex: none; height: 53px; border-bottom: 1px solid #dadce0; display: flex; align-items: center; padding: 0 20px 0 18px; }
.infobar span { margin-left: 18px; width: 257px; font-size: 13px; letter-spacing: -0.32px; color: #1f1f1f; }
.infobar button { width: 112px; height: 38px; border: 0; border-radius: 19px; background: #0b57d0; color: #fff; font-size: 13px; font-weight: 600; letter-spacing: -0.3px; padding: 0 0 0 1px; }
.close { margin-left: auto; color: #474747; }

/* console navigation */
.aws { flex: none; height: 32px; background: #232f3e; border-bottom: 1px solid #525c68; display: flex; align-items: center; color: #fff; }
.logo { width: 25px; margin-left: 15px; margin-top: -2px; }
.logo span { display: block; font-size: 14px; line-height: 11px; height: 12px; font-weight: 400; text-align: center; letter-spacing: -0.1px; }
.sep { width: 1px; height: 18px; background: #414b58; margin-left: 13px; }
.apps { margin-left: 14px; }
.services { margin-left: 5px; width: 50px; font-size: 11px; font-weight: 600; letter-spacing: -0.85px; margin-top: -3px; }
.nav-search { width: 432px; height: 24px; border: 1px solid #868d95; border-radius: 1px; background: #16191f; display: flex; align-items: center; padding: 0 6px 0 8px; color: #c9d0d5; margin-top: -1px; }
.nav-search em { margin-left: 8px; color: #95a5a6; letter-spacing: -0.4px; }
.nav-search span { margin-left: auto; font-size: 11px; color: #95a5a6; letter-spacing: 0.4px; }
.nav-icons { margin-left: auto; display: flex; align-items: center; font-size: 10px; font-weight: 600; letter-spacing: -0.5px; }
.nav-icons div { height: 19px; display: flex; align-items: center; justify-content: center; border-right: 1px solid #414b58; }
.c1 { width: 41px; }
.c2 { width: 40px; }
.c3 { width: 40px; }
.c4 { width: 41px; }
.nav-icons .c5 { width: 87px; justify-content: flex-start; padding-left: 13px; }
.nav-icons .c6 { width: 91px; justify-content: flex-start; padding-left: 14px; border: 0; }
.c5 span { width: 52px; }
.c6 span { width: 55px; }
.nav-icons span { margin-top: -2px; }
.nav-icons .c5 svg, .nav-icons .c6 svg { margin-top: -2px; }

/* body */
.body { height: 497px; flex: none; display: flex; background: #f2f3f3; }
.side { width: 175px; background: #fff; overflow: hidden; color: #545b64; font-size: 11px; line-height: 17px; }
.side-h { height: 51px; border-bottom: 1px solid #eaeded; display: flex; align-items: center; padding: 0 18px 0 25.500px; justify-content: space-between; }
.side-h h2 { font-size: 14px; line-height: 18px; font-weight: 700; letter-spacing: -0.14px; color: #16191f; margin-top: -2px; }
.ec2 { display: flex; align-items: center; gap: 5px; margin: 15px 0 0 25.500px; }
.select { margin: 10px 0 0 26px; width: 136px; height: 26px; border: 1px solid #687078; border-radius: 1px; display: flex; align-items: center; justify-content: space-between; padding: 0 8px 3px 6px; }
.select em { color: #687078; letter-spacing: 0.2px; }
.select svg { margin-top: 2px; }
.group { display: flex; align-items: center; margin: 15px 0 8px 10px; height: 17px; letter-spacing: -0.2px; }
.group b { margin-left: 6.500px; }
.sec { letter-spacing: -0.1px; }
.g2 { margin-top: 17px; }
.side li { margin: 0 25px 7px 25.500px; white-space: normal; letter-spacing: -0.06px; }
.side li.on { color: #0073bb; font-weight: 700; letter-spacing: -0.32px; }
.scroll { width: 17px; background: #f1f1f1; display: flex; flex-direction: column; align-items: center; padding: 8px 2px 7px 2px; }
.thumb { width: 13px; height: 117px; background: #c1c1c1; margin: 5px 0 auto; }

main { width: 1142px; border-left: 1px solid #cfd5d5; padding-top: 1px; position: relative; }
.flash { position: relative; z-index: 1; height: 29px; margin-left: -1px; background: #1d8102; color: #fff; display: flex; align-items: center; padding: 0 15px 1px 10px; font-size: 11px; font-weight: 600; letter-spacing: -0.085px; box-shadow: 0 1px 2px rgba(0, 28, 36, .35); }
.flash span { margin-left: 6px; }
.fx { margin-left: auto; }
.flash2 { height: 7px; margin: 0 8px 0 7px; background: #1d8102; box-shadow: 0 1px 2px rgba(0, 28, 36, .3); }
.notif { position: absolute; z-index: 2; left: 423px; top: 25px; width: 294px; height: 22px; background: #2a2e33; border-radius: 2px; color: #fff; display: flex; align-items: center; padding: 0 0 2px 10px; font-size: 11px; box-shadow: 0 1px 2px rgba(0, 0, 0, .4); }
.notif b { width: 83px; letter-spacing: -0.1px; }
.notif span { width: 32.500px; display: flex; align-items: center; gap: 3px; font-size: 12px; }
.notif svg { margin-top: 2px; }
.down { margin-left: 11px; }

.crumbs { height: 17px; margin: 22px 0 0 18.500px; display: flex; align-items: center; font-size: 11.5px; color: #687078; }
.crumbs a { color: #0073bb; line-height: 14px; border-bottom: 1px solid #0073bb; width: 21px; letter-spacing: -0.3px; }
.crumbs .c-ig { width: 92px; letter-spacing: -0.23px; }
.crumbs svg { margin: 2px 8px 0 9px; }
.crumbs b { font-size: 11px; font-weight: 700; letter-spacing: -0.05px; }
.title { display: flex; align-items: center; justify-content: space-between; margin: 9px 19px 0 18.500px; height: 32px; }
.title h1 { font-size: 22px; line-height: 30px; font-weight: 400; letter-spacing: 0.33px; word-spacing: 0.6px; margin-top: -1px; }
main button { border: 1px solid #545b64; border-radius: 2px; background: #fff; color: #545b64; font-size: 11px; font-weight: 700; padding: 0 0 1px; height: 23px; display: flex; align-items: center; justify-content: center; }
.title button { width: 91px; gap: 8px; }

.card { width: 1106px; margin-left: 17px; background: #fff; border: 1px solid #e2e6e6; border-left-color: #cfd5d5; border-right-color: #cfd5d5; border-bottom-color: #879596; font-size: 11px; }
.card h3 { font-size: 14px; font-weight: 700; letter-spacing: -0.22px; }
.details { margin-top: 9px; height: 98px; }
.details header { height: 38px; background: #fafafa; border-bottom: 1px solid #eaeded; display: flex; align-items: center; padding: 0 16.500px 2px; }
.details header a { margin: 3px 0 0 6px; font-size: 10px; font-weight: 700; color: #0073bb; letter-spacing: -0.45px; }
.cols { display: flex; padding-top: 10px; }
.cols > div { width: 274px; height: 35px; padding-left: 12px; border-left: 1px solid #eaeded; }
.cols > .k1 { width: 278px; padding-left: 16.500px; border: 0; }
.cols > .k3 { padding-left: 13px; }
.cols label { display: block; color: #687078; line-height: 16px; }
.cols p { display: flex; align-items: center; height: 16px; margin-top: 2px; }
.cols p svg { color: #545b64; margin: 1px 10px 0 2.500px; }
.cols .green { color: #1d8102; }
.cols .green svg { color: inherit; margin: 1px 4px 0 0; }
.cols a { color: #0073bb; text-decoration: underline; text-underline-offset: 2px; }
.wide { letter-spacing: 0.2px; }

.tags { margin-top: 9px; height: 119px; background: #fafafa; }
.tags-h { display: flex; justify-content: space-between; padding: 7px 16px 0 16.500px; height: 30px; align-items: flex-start; }
.tags-h h3 { margin-top: 1px; letter-spacing: 0; }
.tags-h button { width: 103px; height: 22px; padding-bottom: 2px; }
.tags-f { display: flex; justify-content: space-between; padding: 5px 20px 0 16px; height: 35px; }
.find { width: 519px; height: 22px; border: 1px solid #687078; border-radius: 1px; background: #fff; display: flex; align-items: center; padding-left: 7px; color: #545b64; }
.find em { margin-left: 7px; color: #687078; letter-spacing: 0.15px; }
.pager { display: flex; align-items: center; height: 20px; color: #545b64; }
.flip { transform: scaleX(-1); }
.pager > svg { color: #9aa5a8; }
.pager b { width: 36px; text-align: center; color: #16191f; }
.pager i { width: 1px; height: 20px; background: #e3e7e7; margin: 0 11px; }
.pager .pg { color: #545b64; }
.row { display: flex; height: 26px; align-items: center; background: #fff; }
.row.head { border-top: 1px solid #eaeded; border-bottom: 1px solid #eaeded; background: #fafafa; color: #545b64; font-weight: 700; letter-spacing: -0.2px; }
.row div { width: 96px; padding-left: 16.500px; border-right: 1px solid transparent; line-height: 16px; }
.row.head div:first-child { border-color: #545b64; }
.row div + div { padding-left: 13px; width: 200px; }

.rail { width: 32px; background: #fff; border-left: 1px solid #cfd5d5; }
.rail div { height: 30px; border-bottom: 1px solid #d5dbdb; display: flex; align-items: center; justify-content: center; color: #545b64; }
.rail div:first-child { height: 31px; }
.rail div:last-child { border: 0; padding-bottom: 3px; }

/* console footer */
footer { flex: none; height: 25px; background: #232f3e; border-top: 1px solid #4b5560; display: flex; align-items: center; color: #fff; font-size: 10px; font-weight: 600; padding: 0 13px 3px; letter-spacing: -0.4px; }
footer svg { margin-top: 4px; }
.f1 { margin-left: 4px; width: 67px; }
.f2 { letter-spacing: -0.47px; }
.f3 { margin-left: auto; width: 243px; letter-spacing: -0.42px; }
.f4 { width: 51px; }
.f5 { width: 46px; }
.f6 { width: 83px; letter-spacing: -0.56px; }

/* taskbar */
.taskbar { flex: none; height: 40px; display: flex; align-items: center; background: linear-gradient(90deg, #203840, #21353e 60%, #1c2c40 78%, #1b2942); color: #fff; }
.start { width: 48px; display: flex; justify-content: center; }
.tb-search { width: 288px; height: 40px; background: #f2f2f2; border: 1px solid #a9adaf; display: flex; align-items: center; padding-left: 11px; }
.tb-search span { margin-left: 11px; width: 171px; font-size: 15px; letter-spacing: -0.53px; color: #333; }
.app { width: 48px; height: 40px; margin-right: 1px; display: flex; align-items: center; justify-content: center; border-bottom: 2px solid transparent; padding-top: 2px; }
.app.cop { margin-left: 2px; }
.app.run { width: 40px; margin: 0 5px 0 4px; border-color: #76b9ed; }
.app.duo { border-image: linear-gradient(90deg, #76b9ed 78%, #4f7e9f 78%) 1; border-width: 0 0 2px; border-style: solid; }
.app.cur { background: #4d5e66; border-color: #76b9ed; }
.weather { margin-left: 86px; width: 32px; display: flex; position: relative; }
.weather small { position: absolute; left: 15px; top: -2px; font-size: 9px; }
.temp { font-size: 14px; letter-spacing: -0.46px; width: 49px; }
.tray { display: flex; align-items: center; width: 120px; gap: 11px; margin-left: 6px; }
.tray svg + svg + svg { margin-left: -1px; }
.lang { width: 32px; letter-spacing: -0.48px; }
.clock { width: 60px; display: flex; flex-direction: column; align-items: center; line-height: 18px; letter-spacing: -0.5px; }
.action { position: relative; margin-left: 14px; }
.action small { position: absolute; left: 7px; top: 7px; width: 17px; height: 17px; border-radius: 9px; background: #33383f; border: 1px solid #777; font-size: 12px; line-height: 15px; text-align: center; }
.peek { width: 1px; height: 40px; background: #727c88; margin-left: auto; margin-right: 4px; }
```
